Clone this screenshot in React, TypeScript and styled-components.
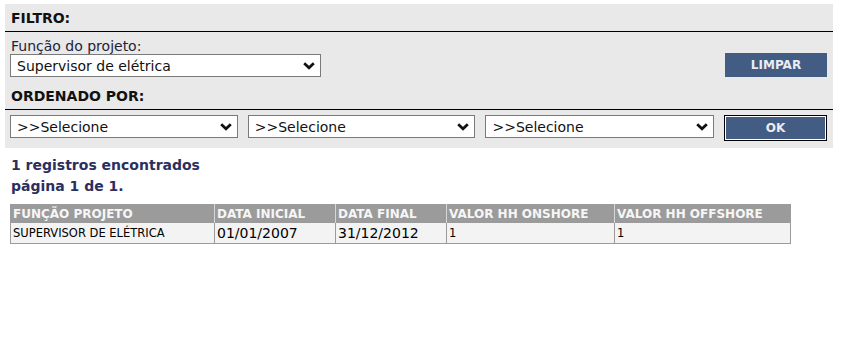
import styled, { createGlobalStyle } from 'styled-components';

const GlobalStyle = createGlobalStyle`
    body {
        margin: 0;
        background: #fff;
        font-family: Verdana, "DejaVu Sans", sans-serif;
    }
`;

const Page = styled.div`
    width: 843px;
    height: 342px;
    padding: 4px 10px 0 5px;
    box-sizing: border-box;
`;

const FilterPanel = styled.div`
    width: 828px;
    background: #e9e9e9;
    padding-bottom: 7px;
`;

const SectionTitle = styled.div`
    font-size: 14px;
    line-height: 16px;
    font-weight: bold;
    color: #111;
    padding: 6px 6px 5px;
    border-bottom: 1px solid #000;
`;

const FieldRow = styled.div`
    display: flex;
    align-items: flex-end;
    justify-content: space-between;
    padding: 6px 0 5px 5px;
`;

const FieldLabel = styled.div`
    font-size: 14px;
    line-height: 16px;
    color: #1c2338;
    padding-left: 1px;
`;

const SelectBox = styled.div<{ $width: number }>`
    width: ${(p) => p.$width}px;
    height: 23px;
    box-sizing: border-box;
    border: 1px solid #7a7a7a;
    background: #fff;
    display: flex;
    align-items: center;
    justify-content: space-between;
    padding: 0 5px 0 6px;
    font-size: 14px;
    color: #111;
`;

const OrderRow = styled.div`
    display: flex;
    align-items: flex-start;
    padding: 5px 0 0 5px;
    gap: 10px;
`;

const ActionButton = styled.button<{ $focused?: boolean }>`
    width: ${(p) => (p.$focused ? 103 : 102)}px;
    height: ${(p) => (p.$focused ? 26 : 24)}px;
    margin-right: 6px;
    box-sizing: border-box;
    background: #425c84;
    color: #e9ecf2;
    font-family: Verdana, "DejaVu Sans", sans-serif;
    font-size: 12px;
    font-weight: bold;
    border: ${(p) => (p.$focused ? '1px solid #000' : 'none')};
    box-shadow: ${(p) => (p.$focused ? 'inset 0 0 0 1px #fff' : 'none')};
    padding: 0;
    cursor: pointer;
`;

const Results = styled.div`
    font-size: 14px;
    line-height: 21px;
    font-weight: bold;
    color: #2c2f5e;
    padding: 7px 0 0 6px;
`;

const Table = styled.table`
    margin: 7px 0 0 5px;
    width: 780px;
    border-collapse: collapse;
    table-layout: fixed;
    border: 1px solid #9b9b9b;
`;

const HeadCell = styled.th`
    background: #9b9b9b;
    color: #f6f6f6;
    font-size: 12px;
    font-weight: bold;
    text-align: left;
    height: 17px;
    padding: 0 2px;
    border-left: 1px solid #d6d6d6;
    white-space: nowrap;
    &:first-child {
        border-left: none;
    }
`;

const Cell = styled.td<{ $big?: boolean }>`
    background: #f3f3f3;
    color: #000;
    font-size: ${(p) => (p.$big ? 14 : 11.5)}px;
    height: 20px;
    padding: 0 2px;
    border-left: 1px solid #9b9b9b;
    border-top: 1px solid #9b9b9b;
    white-space: nowrap;
`;

const Chevron = () => (
    <svg width="12" height="8" viewBox="0 0 12 8">
        <path d="M1.2 1.2 L6 5.8 L10.8 1.2" fill="none" stroke="#111" strokeWidth="2.7" />
    </svg>
);

const Select = ({ width, value }: { width: number; value: string }) => (
    <SelectBox $width={width}>
        <span>{value}</span>
        <Chevron />
    </SelectBox>
);

const columns = [
    { title: 'FUNÇÃO PROJETO', width: 204 },
    { title: 'DATA INICIAL', width: 121 },
    { title: 'DATA FINAL', width: 111 },
    { title: 'VALOR HH ONSHORE', width: 168 },
    { title: 'VALOR HH OFFSHORE', width: 176 },
];

const App = () => {
    return (
        <Page>
            <GlobalStyle />
            <FilterPanel>
                <SectionTitle>FILTRO:</SectionTitle>
                <FieldRow>
                    <div>
                        <FieldLabel>Função do projeto:</FieldLabel>
                        <Select width={311} value='Supervisor de elétrica' />
                    </div>
                    <ActionButton>LIMPAR</ActionButton>
                </FieldRow>
                <SectionTitle>ORDENADO POR:</SectionTitle>
                <OrderRow>
                    <Select width={228} value='>>Selecione' />
                    <Select width={228} value='>>Selecione' />
                    <Select width={229} value='>>Selecione' />
                    <ActionButton $focused>OK</ActionButton>
                </OrderRow>
            </FilterPanel>

            <Results>
                <div>1 registros encontrados</div>
                <div>página 1 de 1.</div>
            </Results>

            <Table>
                <colgroup>
                    {columns.map((c) => (
                        <col key={c.title} style={{ width: c.width }} />
                    ))}
                </colgroup>
                <thead>
                    <tr>
                        {columns.map((c) => (
                            <HeadCell key={c.title}>{c.title}</HeadCell>
                        ))}
                    </tr>
                </thead>
                <tbody>
                    <tr>
                        <Cell>SUPERVISOR DE ELÉTRICA</Cell>
                        <Cell $big>01/01/2007</Cell>
                        <Cell $big>31/12/2012</Cell>
                        <Cell>1</Cell>
                        <Cell>1</Cell>
                    </tr>
                </tbody>
            </Table>
        </Page>
    );
};

export default App;
